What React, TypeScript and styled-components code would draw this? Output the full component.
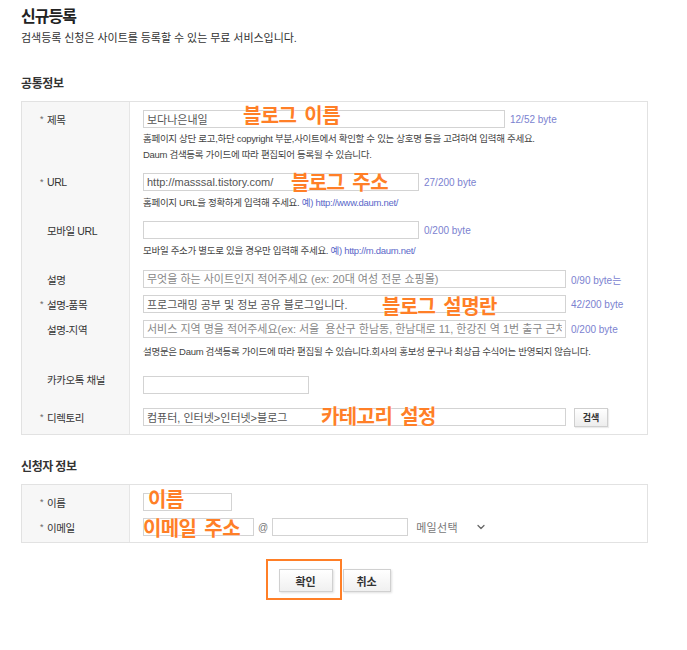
import * as React from 'react';
import styled, { createGlobalStyle } from 'styled-components';
import { ChevronDown } from 'lucide-react';

const GlobalStyle = createGlobalStyle`
  body {
    margin: 0;
    background: #fff;
    color: #333;
    font-family: "Liberation Sans", "Noto Sans CJK KR", sans-serif;
  }
`;

const Page = styled.div`
  width: 627px;
  padding: 4px 0 40px 21px;
`;

const Title = styled.h1`
  margin: 0;
  font-size: 16px;
  line-height: 22px;
  font-weight: 700;
  letter-spacing: -1px;
  color: #222;
  font-family: "Noto Sans CJK KR", sans-serif;
`;

const Lead = styled.p`
  margin: 5px 0 0;
  font-size: 11px;
  line-height: 14px;
  letter-spacing: -0.05px;
  color: #333;
`;

const SectionTitle = styled.h2<{ $mt: number }>`
  margin: ${(p) => p.$mt}px 0 0;
  font-size: 12px;
  line-height: 16px;
  font-weight: 700;
  letter-spacing: -0.4px;
  color: #333;
  font-family: "Noto Sans CJK KR", sans-serif;
`;

const Table = styled.div<{ $pb: number }>`
  margin-top: 10px;
  border: 1px solid #e2e2e2;
  padding: 8px 0 ${(p) => p.$pb}px;
  background: linear-gradient(
    to right,
    #f7f7f7 107px,
    #e6e6e6 107px,
    #e6e6e6 108px,
    #fff 108px
  );
`;

const Row = styled.div<{ $mt?: number }>`
  display: flex;
  margin-top: ${(p) => p.$mt ?? 0}px;
`;

const Label = styled.div<{ $shift?: number }>`
  width: 108px;
  flex: none;
  box-sizing: border-box;
  padding-left: 18px;
  display: flex;
  align-items: center;
  align-self: flex-start;
  height: 18px;
  margin-top: ${(p) => p.$shift ?? 0}px;
  font-size: 10.5px;
  letter-spacing: -0.4px;
  color: #333;
`;

const Star = styled.span<{ $on: boolean }>`
  width: 7px;
  font-size: 9px;
  color: #666;
  visibility: ${(p) => (p.$on ? 'visible' : 'hidden')};
`;

const Field = styled.div`
  flex: 1;
  position: relative;
  padding-left: 13px;
`;

const Line = styled.div`
  display: flex;
  align-items: center;
  height: 18px;
`;

const Input = styled.input<{ $w: number }>`
  width: ${(p) => p.$w}px;
  height: 18px;
  box-sizing: border-box;
  border: 1px solid #d3d3d3;
  padding: 0 3px;
  margin: 0;
  font-family: inherit;
  font-size: 11px;
  color: #555;
  background: #fff;
  outline: none;
  &::placeholder {
    color: #888;
  }
`;

const Count = styled.span`
  margin-left: 5px;
  font-size: 10px;
  color: #7b82d0;
  white-space: nowrap;
`;

const Help = styled.p<{ $mt?: number }>`
  margin: ${(p) => p.$mt ?? 4}px 0 0;
  font-size: 9.5px;
  line-height: 16px;
  letter-spacing: -0.3px;
  color: #444;
  white-space: nowrap;
`;

const Ex = styled.span`
  color: #5b68c9;
`;

const SmallButton = styled.button`
  margin-left: 8px;
  width: 34px;
  height: 19px;
  padding: 0;
  border: 1px solid #cfcfcf;
  background: linear-gradient(#fff, #ededed);
  box-shadow: 1px 1px 1px rgba(0, 0, 0, 0.08);
  font-family: "Noto Sans CJK KR", sans-serif;
  font-size: 9px;
  font-weight: 700;
  color: #333;
`;

const At = styled.span`
  margin: 0 4px 0 4px;
  font-size: 10px;
  color: #777;
`;

const MailSelect = styled.div`
  margin-left: 8px;
  display: flex;
  align-items: center;
  gap: 17px;
  font-size: 11px;
  letter-spacing: 0.3px;
  color: #777;
  svg {
    color: #666;
  }
`;

const Note = styled.span<{ $left: number; $top: number }>`
  position: absolute;
  left: ${(p) => p.$left}px;
  top: ${(p) => p.$top}px;
  font-family: "Noto Sans CJK KR", sans-serif;
  font-size: 20px;
  line-height: 21px;
  font-weight: 700;
  letter-spacing: -0.6px;
  word-spacing: 4px;
  color: #ff7f27;
  white-space: nowrap;
  pointer-events: none;
  text-shadow: 0 0 2px #fff;
`;

const ButtonBar = styled.div`
  display: flex;
  justify-content: center;
  gap: 10px;
  margin-top: 26px;
`;

const Highlight = styled.div`
  position: relative;
  &::after {
    content: '';
    position: absolute;
    top: -10px;
    left: -13px;
    right: -9px;
    bottom: -8px;
    border: 2px solid #ff7f27;
    pointer-events: none;
  }
`;

const ActionButton = styled.button<{ $w: number }>`
  width: ${(p) => p.$w}px;
  height: 23px;
  padding: 0;
  border: 1px solid #d0d0d0;
  background: linear-gradient(#fff, #f0f0f0);
  box-shadow: 1px 1px 2px rgba(0, 0, 0, 0.12);
  font-family: "Noto Sans CJK KR", sans-serif;
  font-size: 11px;
  font-weight: 700;
  color: #333;
`;

const Req = ({ on, children }: { on?: boolean; children: React.ReactNode }) => (
  <>
    <Star $on={!!on}>*</Star>
    {children}
  </>
);

export default function App() {
  return (
    <>
      <GlobalStyle />
      <Page>
        <Title>신규등록</Title>
        <Lead>검색등록 신청은 사이트를 등록할 수 있는 무료 서비스입니다.</Lead>

        <SectionTitle $mt={30}>공통정보</SectionTitle>
        <Table $pb={8}>
          <Row>
            <Label><Req on>제목</Req></Label>
            <Field>
              <Line>
                <Input $w={362} defaultValue="보다나은내일" />
                <Count>12/52 byte</Count>
              </Line>
              <Help $mt={3}>
                홈페이지 상단 로고,하단 copyright 부분,사이트에서 확인할 수 있는 상호명 등을 고려하여 입력해 주세요.
                <br />
                Daum 검색등록 가이드에 따라 편집되어 등록될 수 있습니다.
              </Help>
              <Note $left={113} $top={-6}>블로그 이름</Note>
            </Field>
          </Row>

          <Row $mt={10}>
            <Label><Req on>URL</Req></Label>
            <Field>
              <Line>
                <Input $w={276} defaultValue="http://masssal.tistory.com/" />
                <Count>27/200 byte</Count>
              </Line>
              <Help>
                홈페이지 URL을 정확하게 입력해 주세요. <Ex>예) http://www.daum.net/</Ex>
              </Help>
              <Note $left={161} $top={-2}>블로그 주소</Note>
            </Field>
          </Row>

          <Row $mt={10}>
            <Label><Req>모바일 URL</Req></Label>
            <Field>
              <Line>
                <Input $w={276} />
                <Count>0/200 byte</Count>
              </Line>
              <Help>
                모바일 주소가 별도로 있을 경우만 입력해 주세요. <Ex>예) http://m.daum.net/</Ex>
              </Help>
            </Field>
          </Row>

          <Row $mt={11}>
            <Label><Req>설명</Req></Label>
            <Field>
              <Line>
                <Input $w={423} placeholder="무엇을 하는 사이트인지 적어주세요 (ex: 20대 여성 전문 쇼핑몰)" />
                <Count>0/90 byte는</Count>
              </Line>
            </Field>
          </Row>

          <Row $mt={7}>
            <Label><Req on>설명-품목</Req></Label>
            <Field>
              <Line>
                <Input $w={423} defaultValue="프로그래밍 공부 및 정보 공유 블로그입니다." />
                <Count>42/200 byte</Count>
              </Line>
              <Note $left={252} $top={0}>블로그 설명란</Note>
            </Field>
          </Row>

          <Row $mt={7}>
            <Label><Req>설명-지역</Req></Label>
            <Field>
              <Line>
                <Input
                  $w={423}
                  placeholder="서비스 지역 명을 적어주세요(ex: 서울  용산구 한남동, 한남대로 11, 한강진 역 1번 출구 근처)"
                />
                <Count>0/200 byte</Count>
              </Line>
              <Help $mt={6}>
                설명문은 Daum 검색등록 가이드에 따라 편집될 수 있습니다.회사의 홍보성 문구나 최상급 수식어는 반영되지 않습니다.
              </Help>
            </Field>
          </Row>

          <Row $mt={16}>
            <Label $shift={-6}><Req>카카오톡 채널</Req></Label>
            <Field>
              <Line>
                <Input $w={166} />
              </Line>
            </Field>
          </Row>

          <Row $mt={14}>
            <Label><Req on>디렉토리</Req></Label>
            <Field>
              <Line>
                <Input $w={423} defaultValue="컴퓨터, 인터넷>인터넷>블로그" />
                <SmallButton type="button">검색</SmallButton>
              </Line>
              <Note $left={191} $top={-3}>카테고리 설정</Note>
            </Field>
          </Row>
        </Table>

        <SectionTitle $mt={23}>신청자 정보</SectionTitle>
        <Table $pb={6}>
          <Row>
            <Label><Req on>이름</Req></Label>
            <Field>
              <Line>
                <Input $w={89} />
              </Line>
              <Note $left={18} $top={-5}>이름</Note>
            </Field>
          </Row>
          <Row $mt={7}>
            <Label><Req on>이메일</Req></Label>
            <Field>
              <Line>
                <Input $w={111} />
                <At>@</At>
                <Input $w={136} />
                <MailSelect>
                  메일선택
                  <ChevronDown size={12} strokeWidth={2.5} />
                </MailSelect>
              </Line>
              <Note $left={13} $top={-1}>이메일 주소</Note>
            </Field>
          </Row>
        </Table>

        <ButtonBar>
          <Highlight>
            <ActionButton type="button" $w={54}>확인</ActionButton>
          </Highlight>
          <ActionButton type="button" $w={48}>취소</ActionButton>
        </ButtonBar>
      </Page>
    </>
  );
}
